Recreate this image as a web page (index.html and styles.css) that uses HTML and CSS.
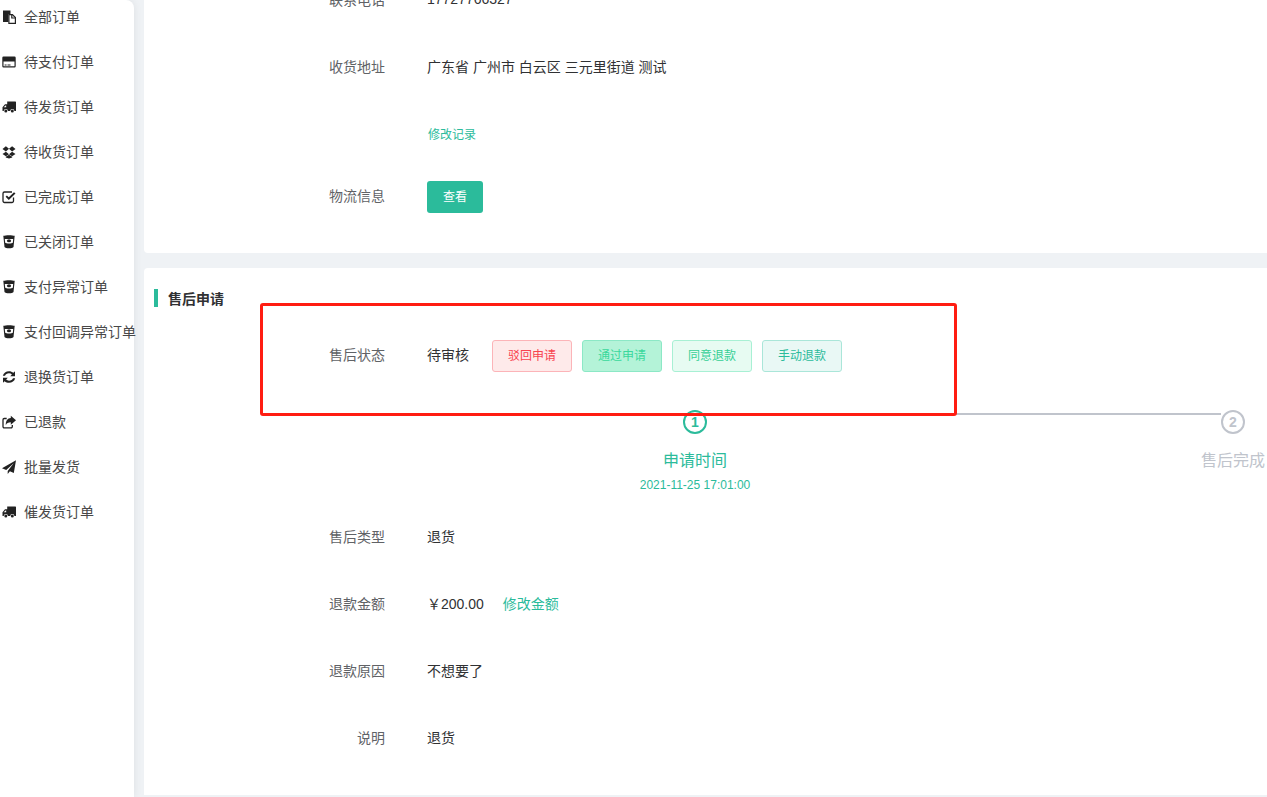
FILE: index.html
```html
<!DOCTYPE html>
<html lang="en">
<head>
  <meta charset="UTF-8" />
  <title>售后申请</title>
  <link rel="stylesheet" href="styles.css">
</head>
<body>
  <svg class="sprite" xmlns="http://www.w3.org/2000/svg">
    <symbol id="i-files" viewBox="0 0 14 14">
      <path d="M1 .5h7.500v3.500H6.500v8H1z"/>
      <path d="M6.900 4.600h3.500l3 3v5.800H6.900z" fill="#fff" stroke="#222" stroke-width="1.200"/>
      <path d="M9.800 4.600v3.400h3.400" fill="none" stroke="#222" stroke-width="1.200"/>
    </symbol>
    <symbol id="i-card" viewBox="0 0 14 14">
      <path d="M1.500 1.500h11a1.200 1.200 0 0 1 1.200 1.200v8.600a1.200 1.200 0 0 1-1.200 1.200h-11A1.200 1.200 0 0 1 .3 11.300V2.700A1.200 1.200 0 0 1 1.500 1.500zM1.500 6.500v4.800h11V6.500zM2.600 9.500h2v.9h-2zM5.500 9.500h3v.9h-3z" fill-rule="evenodd"/>
    </symbol>
    <symbol id="i-truck" viewBox="0 0 14 14">
      <path d="M5.200 1.500h8.200a.6.600 0 0 1 .6.600v8.900H.5V7.300L3 4.300h2.200z"/>
      <circle cx="3.800" cy="11" r="2.100" fill="#fff"/>
      <circle cx="10.300" cy="11" r="2.100" fill="#fff"/>
      <circle cx="3.800" cy="11" r="1.500"/>
      <circle cx="10.300" cy="11" r="1.500"/>
      <path d="M1.700 7.200l1.800-1.800h.7v1.800z" fill="#fff"/>
    </symbol>
    <symbol id="i-dropbox" viewBox="0 0 14 14">
      <path d="M3.900 1.200L7 3.800 3.900 6.500.5 4zM10.100 1.200L13.500 4 10.100 6.500 7 3.800zM3.900 6.700L7 9.200l-3.100 2-3.400-2.100zM10.100 6.700l3.400 2.400-3.400 2.100L7 9.200z"/>
      <path d="M3.800 11.700l3.200-2 3.200 2v.8L7 13.500l-3.200-1z"/>
    </symbol>
    <symbol id="i-check" viewBox="0 0 14 14">
      <path d="M11.500 7.600V11A1.500 1.500 0 0 1 10 12.500H2.500A1.500 1.500 0 0 1 1 11V3.500A1.500 1.500 0 0 1 2.500 2H10" fill="none" stroke="#222" stroke-width="1.300"/>
      <path d="M3.600 6.700l1.300-1.300 1.900 1.900 5.200-5.100 1.500 1.400-6.700 6.500z"/>
    </symbol>
    <symbol id="i-cup" viewBox="0 0 14 14">
      <path d="M1.300.8C3.500-.1 10.500-.1 12.700.8l-1.200 11.200C10.800 13.800 3.200 13.800 2.500 12z"/>
      <path d="M2.800 3.900h8.400L10.800 7.700c-.6 1.100-7 1.100-7.600 0z" fill="#fff"/>
      <ellipse cx="7" cy="5.800" rx="2.100" ry="1.500"/>
    </symbol>
    <symbol id="i-refresh" viewBox="0 0 14 14">
      <path d="M.8 5.800C1.500 3 4 1.200 7 1.200c1.700 0 3.200.6 4.400 1.600L13 1.300v5H8.200l1.700-1.900C9.100 3.700 8.100 3.300 7 3.300 5 3.300 3.500 4.300 3 5.800z"/>
      <path d="M13.200 8.200C12.500 11 10 12.800 7 12.800c-1.700 0-3.200-.6-4.400-1.600L1 12.700v-5h4.800L4.100 9.600C4.900 10.300 5.900 10.700 7 10.700c2 0 3.500-1 4-2.500z"/>
    </symbol>
    <symbol id="i-share" viewBox="0 0 14 14">
      <path d="M10.300 10v1.600a1.200 1.200 0 0 1-1.200 1.200H2.200A1.200 1.200 0 0 1 1 11.600V4.700a1.200 1.200 0 0 1 1.200-1.200h2.500" fill="none" stroke="#222" stroke-width="1.300"/>
      <path d="M8.800.8L14 5.300 8.800 9.800V7.300C6.200 7.300 4.600 8 3.800 10.200 3.600 5.800 5.600 3.200 8.800 3.100z"/>
    </symbol>
    <symbol id="i-plane" viewBox="0 0 14 14">
      <path d="M14 .2L11.800 13 7.900 11.300 5.700 14V11L11.700 3.300 4.200 10 0 8.200z"/>
    </symbol>
  </svg>

  <div class="page">
    <aside class="sidebar">
      <ul class="menu">
        <li class="menu-item"><svg class="menu-icon"><use href="#i-files"/></svg>全部订单</li>
        <li class="menu-item"><svg class="menu-icon"><use href="#i-card"/></svg>待支付订单</li>
        <li class="menu-item"><svg class="menu-icon"><use href="#i-truck"/></svg>待发货订单</li>
        <li class="menu-item"><svg class="menu-icon"><use href="#i-dropbox"/></svg>待收货订单</li>
        <li class="menu-item"><svg class="menu-icon"><use href="#i-check"/></svg>已完成订单</li>
        <li class="menu-item"><svg class="menu-icon"><use href="#i-cup"/></svg>已关闭订单</li>
        <li class="menu-item"><svg class="menu-icon"><use href="#i-cup"/></svg>支付异常订单</li>
        <li class="menu-item"><svg class="menu-icon"><use href="#i-cup"/></svg>支付回调异常订单</li>
        <li class="menu-item"><svg class="menu-icon"><use href="#i-refresh"/></svg>退换货订单</li>
        <li class="menu-item"><svg class="menu-icon"><use href="#i-share"/></svg>已退款</li>
        <li class="menu-item"><svg class="menu-icon"><use href="#i-plane"/></svg>批量发货</li>
        <li class="menu-item"><svg class="menu-icon"><use href="#i-truck"/></svg>催发货订单</li>
      </ul>
    </aside>

    <main class="content">
      <section class="card card-address">
        <div class="row">
          <div class="row-label">联系电话</div>
          <div class="row-value">17727766327</div>
        </div>
        <div class="row">
          <div class="row-label">收货地址</div>
          <div class="row-value">广东省 广州市 白云区 三元里街道 测试</div>
        </div>
        <div class="row">
          <div class="row-label"></div>
          <a class="link-small">修改记录</a>
        </div>
        <div class="row row-action">
          <div class="row-label">物流信息</div>
          <button class="btn-primary">查看</button>
        </div>
      </section>

      <section class="card card-aftersale">
        <h3 class="card-title">售后申请</h3>
        <div class="row">
          <div class="row-label">售后状态</div>
          <div class="row-value status-text">待审核</div>
          <div class="actions">
            <button class="btn btn-reject">驳回申请</button>
            <button class="btn btn-pass">通过申请</button>
            <button class="btn btn-agree">同意退款</button>
            <button class="btn btn-manual">手动退款</button>
          </div>
        </div>

        <div class="steps">
          <div class="step step-active">
            <div class="step-head">
              <span class="step-num">1</span>
              <span class="step-line"></span>
            </div>
            <div class="step-main">
              <div class="step-title">申请时间</div>
              <div class="step-date">2021-11-25 17:01:00</div>
            </div>
          </div>
          <div class="step">
            <div class="step-head">
              <span class="step-num">2</span>
            </div>
            <div class="step-main">
              <div class="step-title">售后完成</div>
            </div>
          </div>
        </div>

        <div class="row">
          <div class="row-label">售后类型</div>
          <div class="row-value">退货</div>
        </div>
        <div class="row">
          <div class="row-label">退款金额</div>
          <div class="row-value">￥200.00</div>
          <a class="link-edit">修改金额</a>
        </div>
        <div class="row">
          <div class="row-label">退款原因</div>
          <div class="row-value">不想要了</div>
        </div>
        <div class="row">
          <div class="row-label">说明</div>
          <div class="row-value">退货</div>
        </div>
      </section>
    </main>
  </div>

  <div class="highlight-box"></div>
</body>
</html>
```

FILE: styles.css
```css
* {
  box-sizing: border-box;
}

html, body {
  height: 100%;
}

body {
  margin: 0;
  position: relative;
  overflow: hidden;
  background: #eff2f5;
  font-family: "Liberation Sans", "Noto Sans CJK SC", sans-serif;
  font-size: 14px;
  color: #303133;
}

.sprite {
  display: none;
}

.page {
  display: flex;
  height: 797px;
}

.sidebar {
  flex: 0 0 134px;
  min-width: 0;
  background: #fff;
  border-top-right-radius: 8px;
  box-shadow: 0 0 8px rgba(0, 0, 0, 0.08);
  z-index: 1;
}

.menu {
  list-style: none;
  margin: -7px 0 0;
  padding: 0;
}

.menu-item {
  display: flex;
  align-items: center;
  height: 45px;
  padding-left: 2px;
  white-space: nowrap;
  color: #484848;
}

.menu-icon {
  flex: 0 0 14px;
  width: 14px;
  height: 14px;
  margin-top: 3px;
  margin-right: 8px;
  fill: #222;
}

.content {
  flex: 1;
  min-width: 0;
  padding-left: 10px;
}

.card {
  background: #fff;
}

.card-address {
  margin-top: -33px;
  padding-bottom: 27px;
  border-bottom-left-radius: 4px;
}

.card-aftersale {
  height: 527px;
  margin-top: 15px;
  padding-top: 21px;
  border-top-left-radius: 4px;
}

.card-title {
  height: 18px;
  margin: 0 0 15px 10px;
  padding-left: 10px;
  border-left: 4px solid #2bbb9b;
  font-size: 14px;
  line-height: 20px;
  font-weight: 700;
  color: #303133;
}

.row {
  display: flex;
  align-items: center;
  height: 67px;
}

.row-action {
  height: 58px;
}

.row-label {
  width: 241px;
  margin-right: 42px;
  margin-bottom: 4px;
  text-align: right;
  color: #606266;
  white-space: nowrap;
}

.row-value {
  margin-bottom: 4px;
  color: #303133;
  white-space: nowrap;
}

.status-text {
  margin-right: 23px;
}

.link-small {
  margin-left: 1px;
  margin-bottom: 2px;
  font-size: 12px;
  color: #2bbb9b;
}

.link-edit {
  margin-left: 19px;
  margin-bottom: 4px;
  color: #2bbb9b;
}

.btn-primary {
  width: 56px;
  height: 32px;
  padding: 0 0 4px;
  border: none;
  border-radius: 3px;
  background: #2bbb9b;
  color: #fff;
  font-family: inherit;
  font-size: 12px;
}

.actions {
  display: flex;
  gap: 10px;
}

.btn {
  width: 80px;
  height: 32px;
  padding: 0 0 2px;
  border: 1px solid;
  border-radius: 3px;
  font-family: inherit;
  font-size: 12px;
}

.btn-reject {
  background: #feeaea;
  border-color: #fcb4b8;
  color: #f8434f;
}

.btn-pass {
  background: #b4f3d8;
  border-color: #8ce8c6;
  color: #3ad89c;
}

.btn-agree {
  background: #e7fbf2;
  border-color: #a8f0d4;
  color: #35cf95;
}

.btn-manual {
  background: #e9f8f5;
  border-color: #aae6d9;
  color: #2bbb9b;
}

.steps {
  display: flex;
  height: 94px;
  margin-top: 21px;
  padding-left: 539px;
}

.step {
  flex: 0 0 538px;
}

.step-head {
  display: flex;
  align-items: flex-start;
}

.step-num {
  flex: 0 0 24px;
  width: 24px;
  height: 24px;
  border: 2px solid #c0c4cc;
  border-radius: 50%;
  text-align: center;
  font-size: 14px;
  font-weight: 700;
  line-height: 20px;
  color: #c0c4cc;
}

.step-line {
  flex: 1;
  height: 2px;
  margin-top: 3px;
  background: #c0c4cc;
}

.step-main {
  width: 128px;
  margin-left: -52px;
  text-align: center;
  color: #c0c4cc;
}

.step-title {
  margin-top: 17px;
  font-size: 16px;
  line-height: 20px;
  white-space: nowrap;
}

.step-date {
  margin-top: 6px;
  font-size: 12px;
  line-height: 16px;
  white-space: nowrap;
}

.step-active .step-num {
  border-color: #2bbb9b;
  color: #2bbb9b;
}

.step-active .step-main {
  color: #2bbb9b;
}

/* red annotation drawn over the screenshot */
.highlight-box {
  position: absolute;
  left: 260px;
  top: 303px;
  width: 697px;
  height: 113px;
  border: 3px solid #ff1d12;
  border-radius: 3px;
  z-index: 2;
}
```
